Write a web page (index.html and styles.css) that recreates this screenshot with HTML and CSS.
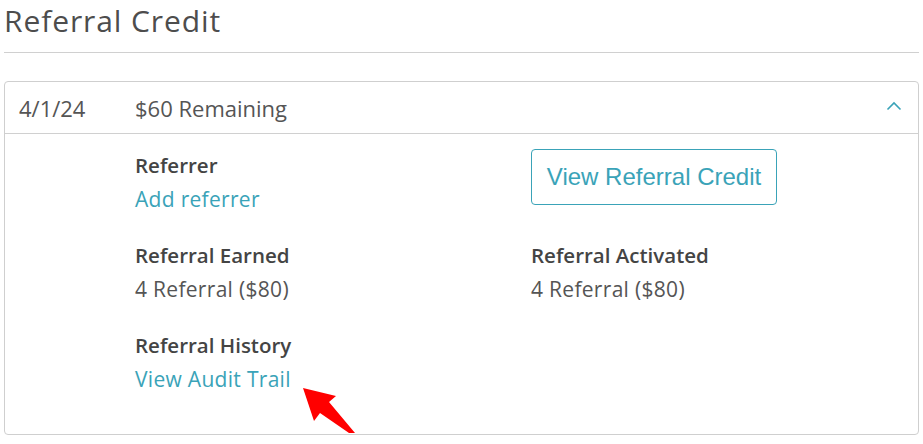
FILE: index.html
```html
<!DOCTYPE html>
<html>
<head>
<meta charset="utf-8">
<link rel="stylesheet" href="styles.css">
</head>
<body>
<div class="page">
  <h1 class="title">Referral Credit</h1>
  <div class="card">
    <div class="card-head">
      <span class="date">4/1/24</span>
      <span class="remaining">$60 Remaining</span>
      <svg class="chevron" width="16" height="10" viewBox="0 0 16 10"><path d="M1.5 8.5 L8 2 L14.5 8.5" fill="none" stroke="#3aa3b8" stroke-width="1.6"/></svg>
    </div>
    <div class="card-body">
      <div class="field">
        <div class="label">Referrer</div>
        <a class="link">Add referrer</a>
      </div>
      <div class="field">
        <button class="btn">View Referral Credit</button>
      </div>
      <div class="field">
        <div class="label">Referral Earned</div>
        <div class="value">4 Referral ($80)</div>
      </div>
      <div class="field">
        <div class="label">Referral Activated</div>
        <div class="value">4 Referral ($80)</div>
      </div>
      <div class="field">
        <div class="label">Referral History</div>
        <a class="link">View Audit Trail</a>
      </div>
    </div>
    <svg class="arrow" width="60" height="52" viewBox="0 0 60 52"><polygon points="2,2 35,10 28,16 54,47 48,47 19,27 13,35" fill="#ff0000"/></svg>
  </div>
</div>
</body>
</html>
```
FILE: styles.css
```css
* { box-sizing: border-box; }
body {
  margin: 0;
  background: #fff;
  font-family: "Open Sans", "Lato", sans-serif;
  color: #4a4a4a;
}
.page {
  padding: 0 4px;
}
.title {
  margin: 0;
  height: 53px;
  font-size: 30px;
  line-height: 42px;
  letter-spacing: 0.9px;
  font-weight: 400;
  color: #4d4d4d;
  border-bottom: 1px solid #d0d0d0;
}
.card {
  position: relative;
  margin-top: 28px;
  border: 1px solid #cfcfcf;
  border-radius: 4px;
  height: 354px;
}
.card-head {
  display: flex;
  align-items: center;
  height: 52px;
  padding: 0 16px 0 14px;
  border-bottom: 1px solid #d0d0d0;
  font-size: 22px;
  color: #555;
}
.date { width: 116px; }
.remaining { flex: 1; }
.chevron { margin-top: -4px; }
.card-body {
  display: grid;
  grid-template-columns: 396px 1fr;
  row-gap: 22px;
  padding: 17px 0 0 130px;
}
.field {
  display: flex;
  flex-direction: column;
  align-items: flex-start;
  min-height: 68px;
}
.label {
  font-size: 20.5px;
  font-weight: 600;
  line-height: 28px;
  color: #444;
}
.value, .link {
  font-size: 21px;
  line-height: 40px;
  letter-spacing: 0.3px;
  color: #555;
}
.link { color: #3aa3b8; }
.btn {
  margin-top: -2px;
  width: 246px;
  height: 56px;
  background: #fff;
  border: 1px solid #3aa3b8;
  border-radius: 4px;
  font-family: "Liberation Sans", Arial, sans-serif;
  font-size: 24px;
  color: #3aa3b8;
  padding: 0;
}
.arrow {
  position: absolute;
  left: 296px;
  top: 304px;
}
```
